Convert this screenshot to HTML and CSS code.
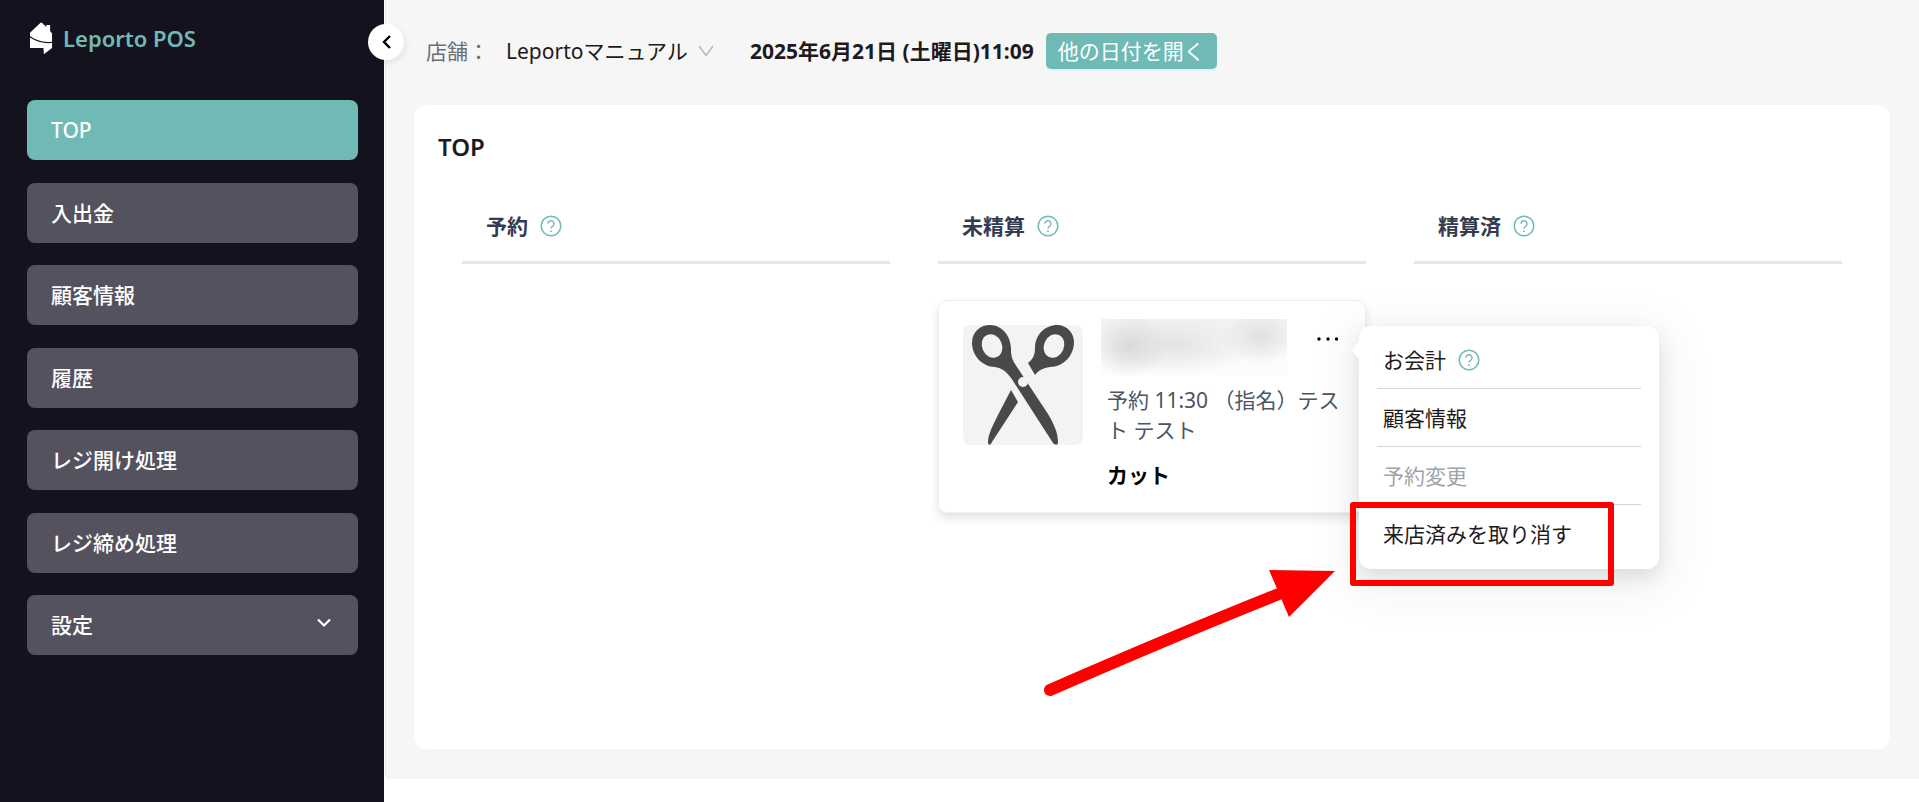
FILE: index.html
```
<!DOCTYPE html>
<html lang="ja">
<head>
  <meta charset="UTF-8">
  <meta name="viewport" content="width=device-width, initial-scale=1.0">
  <title>Leporto POS</title>
  <link rel="stylesheet" href="styles.css">
</head>
<body>
  <svg class="sprite" aria-hidden="true">
    <symbol id="icon-help" viewBox="0 0 22 22">
      <circle cx="11" cy="11" r="9.8" fill="none" stroke="currentColor" stroke-width="1.5"/>
      <path d="M8 8.800a3 3 0 1 1 4.600 2.500c-1 .6-1.600 1.100-1.600 2.300" fill="none" stroke="currentColor" stroke-width="1.4"/>
      <circle cx="11" cy="16.200" r="0.900" fill="currentColor"/>
    </symbol>
  </svg>

  <div class="layout">
    <aside class="sidebar">
      <a class="logo" href="#">
        <svg class="logo-mark" viewBox="0 0 24 33" aria-hidden="true">
          <path d="M0 12.500 0 10.500 11 0h1.500L17 4.500V2.500h4V9l2 2v8.800C14 21 6 18.500 0 14z" fill="#fff"/>
          <path d="M0 15.500C7 20 14 22 23 21.200V26.500L14.500 33 14 26.500H0z" fill="#fff"/>
        </svg>
        <span>Leporto POS</span>
      </a>
      <nav class="nav">
        <a class="nav-item active" href="#">TOP</a>
        <a class="nav-item" href="#">入出金</a>
        <a class="nav-item" href="#">顧客情報</a>
        <a class="nav-item" href="#">履歴</a>
        <a class="nav-item" href="#">レジ開け処理</a>
        <a class="nav-item" href="#">レジ締め処理</a>
        <button class="nav-item" type="button">設定
          <svg class="nav-arrow" viewBox="0 0 14 10" aria-hidden="true"><path d="M1 1.500 7 7.500l6-6" fill="none" stroke="currentColor" stroke-width="2.200"/></svg>
        </button>
      </nav>
      <button class="collapse" type="button" aria-label="メニューを閉じる">
        <svg viewBox="0 0 9 14" aria-hidden="true"><path d="M8 1 2 7l6 6" fill="none" stroke="#000" stroke-width="2.400"/></svg>
      </button>
    </aside>

    <main class="main">
      <header class="topbar">
        <label class="shop-label" for="shop">店舗：</label>
        <div class="shop">
          <select id="shop">
            <option>Leportoマニュアル</option>
          </select>
          <svg viewBox="0 0 16 12" aria-hidden="true"><path d="M1 1l7 9.500L15 1" fill="none" stroke="#b5b8bb" stroke-width="1.400"/></svg>
        </div>
        <strong class="date">2025年6月21日 (土曜日)11:09</strong>
        <button class="date-btn" type="button">他の日付を開く</button>
      </header>

      <section class="panel">
        <h1>TOP</h1>
        <div class="columns">
          <section class="column">
            <h2>予約 <svg class="help"><use href="#icon-help"/></svg></h2>
          </section>

          <section class="column">
            <h2>未精算 <svg class="help"><use href="#icon-help"/></svg></h2>
            <article class="card">
              <svg class="photo" viewBox="0 0 120 120" aria-hidden="true">
                <rect width="120" height="120" rx="8" fill="#f3f3f6"/>
                <g fill="#4a4849">
                  <path d="M27 0C39 0 48 11 48 24c0 7 1 10 4 15L85 89c6 10 10 19 10 28 0 4-3 3-5 1L54 62C48 53 44 44 32 42 20 42 9 31 9 18 9 7 17 0 27 0z"/>
                  <path d="M94 0c10 0 17 8 17 17 0 14-11 25-24 25-7 1-11 3-15 8L65 38c5-4 7-8 7-15C72 9 83 0 94 0z"/>
                  <path d="M48 65l7 12-26 40c-1 3-4 4-4 0 0-8 6-19 11-29z"/>
                </g>
                <g fill="#f3f3f6">
                  <ellipse cx="29" cy="21" rx="10" ry="12" transform="rotate(-24 29 21)"/>
                  <ellipse cx="91" cy="21" rx="10" ry="12" transform="rotate(24 91 21)"/>
                  <circle cx="60" cy="57" r="5"/>
                </g>
              </svg>
              <div class="card-body">
                <div class="card-head">
                  <div class="name-mask"></div>
                  <button class="more" type="button" aria-label="メニュー">
                    <svg viewBox="0 0 22 4" aria-hidden="true"><circle cx="2" cy="2" r="1.700"/><circle cx="11" cy="2" r="1.700"/><circle cx="19.500" cy="2" r="1.700"/></svg>
                  </button>
                </div>
                <p class="booking">予約 11:30 （指名）テスト テスト</p>
                <p class="service">カット</p>
              </div>

              <div class="menu">
                <button type="button">お会計 <svg class="help"><use href="#icon-help"/></svg></button>
                <button type="button">顧客情報</button>
                <button type="button" disabled>予約変更</button>
                <button type="button">来店済みを取り消す</button>
                <div class="marker"></div>
                <svg class="pointer" viewBox="0 0 294 136" aria-hidden="true">
                  <path d="M9 125 Q140 68 238 29" fill="none" stroke="#f00" stroke-width="12" stroke-linecap="round"/>
                  <path d="M228 5l66 1-46 46z" fill="#f00"/>
                </svg>
              </div>
            </article>
          </section>

          <section class="column">
            <h2>精算済 <svg class="help"><use href="#icon-help"/></svg></h2>
          </section>
        </div>
      </section>
    </main>
  </div>
</body>
</html>
```
FILE: styles.css
```
* {
  box-sizing: border-box;
}

body {
  margin: 0;
  font-family: "Noto Sans", "Noto Sans CJK JP", sans-serif;
  font-size: 21px;
  line-height: 30px;
  color: #1f1a20;
  background: #fff;
}

button,
select {
  font: inherit;
  color: inherit;
  border: 0;
  background: none;
  cursor: pointer;
}

a {
  color: inherit;
  text-decoration: none;
}

.sprite {
  display: none;
}

.layout {
  display: flex;
  align-items: flex-start;
  min-height: 100vh;
}

/* sidebar */
.sidebar {
  position: relative;
  flex: 0 0 384px;
  min-height: 100vh;
  padding: 20px 26px 24px 27px;
  background: #14121e;
}

.logo {
  display: flex;
  align-items: center;
  gap: 10px;
  height: 36px;
  padding-left: 3px;
  margin-bottom: 44px;
  font-size: 22px;
  font-weight: 600;
  color: #6fbab5;
}

.logo-mark {
  width: 23px;
  height: 33px;
}

.nav {
  display: flex;
  flex-direction: column;
  justify-content: space-between;
  height: 555px;
}

.nav-item {
  display: flex;
  align-items: center;
  justify-content: space-between;
  width: 100%;
  height: 60px;
  padding: 0 24px;
  border-radius: 8px;
  font-weight: 500;
  color: #fff;
  background: #55525f;
}

.nav-item.active {
  background: #6fbab5;
}

.nav-arrow {
  width: 14px;
  height: 10px;
  margin: 0 3px 4px 0;
}

.collapse {
  position: absolute;
  top: 24px;
  right: -20px;
  z-index: 1;
  display: flex;
  align-items: center;
  justify-content: center;
  width: 36px;
  height: 36px;
  padding: 0;
  border-radius: 50%;
  background: #fff;
  box-shadow: 2px 3px 6px rgba(20, 18, 60, 0.08);
}

.collapse svg {
  width: 9px;
  height: 14px;
}

/* main */
.main {
  flex: 1;
  min-width: 0;
  margin-left: 1px;
  padding: 0 29px 30px 28px;
  border-left: 1px solid #e8e8e8;
  border-bottom-left-radius: 6px;
  background: #f6f6f6;
}

.topbar {
  display: flex;
  align-items: center;
  height: 105px;
  padding: 0 0 3px 12px;
}

.shop-label {
  margin-right: 17px;
  color: #6b6f76;
}

.shop {
  display: flex;
  align-items: center;
  position: relative;
  margin-right: 36px;
}

.shop select {
  appearance: none;
  padding: 0 25px 0 0;
}

.shop svg {
  position: absolute;
  right: 0;
  width: 16px;
  height: 12px;
  pointer-events: none;
}

.date {
  margin-right: 12px;
}

.date-btn {
  height: 36px;
  padding: 0 12px;
  border-radius: 5px;
  color: #fff;
  background: #6fbab5;
  box-shadow: 0 2px 0 #e0f2f1;
}

.panel {
  min-height: calc(100vh - 158px);
  padding: 23px 48px;
  border-radius: 12px;
  background: #fff;
}

h1 {
  margin: 0 0 39px -24px;
  font-size: 24px;
  line-height: 38px;
  font-weight: 600;
}

.columns {
  display: grid;
  grid-template-columns: repeat(3, 1fr);
  gap: 48px;
}

h2 {
  display: flex;
  align-items: center;
  gap: 12px;
  height: 59px;
  margin: 0;
  padding: 0 24px 15px;
  border-bottom: 3px solid #e7e7e7;
  font-size: 21px;
  font-weight: 700;
  color: #333b50;
}

.help {
  flex: none;
  width: 22px;
  height: 22px;
  color: #6fbab5;
}

/* booking card */
.card {
  position: relative;
  display: flex;
  gap: 18px;
  margin-top: 36px;
  padding: 18px 24px 21px;
  border: 1px solid #f0f0f0;
  border-radius: 9px;
  box-shadow: 0 5px 10px rgba(0, 0, 0, 0.12);
}

.photo {
  flex: none;
  width: 120px;
  height: 120px;
  margin-top: 6px;
}

.card-body {
  flex: 1;
  min-width: 0;
}

.card-head {
  display: flex;
  justify-content: space-between;
}

/* customer name is hidden */
.name-mask {
  width: 186px;
  height: 57px;
  background:
    radial-gradient(ellipse 40px 32px at 28px 27px, #d9dadb, transparent),
    radial-gradient(ellipse 75px 30px at 75px 26px, #e2e4e4, transparent),
    radial-gradient(ellipse 38px 26px at 158px 18px, #dfe1e1, transparent),
    linear-gradient(to bottom, #f1f2f2, #fdfdfd 95%);
}

.more {
  display: flex;
  align-items: center;
  height: 39px;
  padding: 0 2px;
}

.more svg {
  width: 22px;
  height: 4px;
}

.booking {
  margin: 9px 0 15px;
  padding-left: 6px;
  color: #4b5563;
}

.service {
  margin: 0 0 1px;
  padding-left: 6px;
  font-weight: 700;
  color: #000;
}

/* popover */
.menu {
  position: absolute;
  top: 25px;
  left: calc(100% - 6px);
  z-index: 2;
  width: 300px;
  padding: 5px 18px 6px;
  border-radius: 12px;
  background: #fff;
  box-shadow: 0 8px 20px rgba(0, 10, 20, 0.1), 0 12px 48px 14px rgba(0, 0, 0, 0.05);
}

.menu::before {
  content: "";
  position: absolute;
  top: 14px;
  left: -8px;
  width: 9px;
  height: 20px;
  background: #fff;
  clip-path: polygon(100% 0, 0 50%, 100% 100%);
}

.menu button {
  display: flex;
  align-items: center;
  gap: 12px;
  width: 100%;
  height: 58px;
  padding: 0 6px;
  border-bottom: 1px solid #d3d5d7;
}

.menu button:disabled {
  color: #a0a3a8;
}

.menu button:last-of-type {
  border-bottom: 0;
}

.marker {
  position: absolute;
  left: -9px;
  bottom: -17px;
  width: 264px;
  height: 84px;
  border: 6px solid #f00;
  border-radius: 3px;
}

.pointer {
  position: absolute;
  top: 239px;
  right: calc(100% + 24px);
  width: 294px;
  height: 136px;
}
```
